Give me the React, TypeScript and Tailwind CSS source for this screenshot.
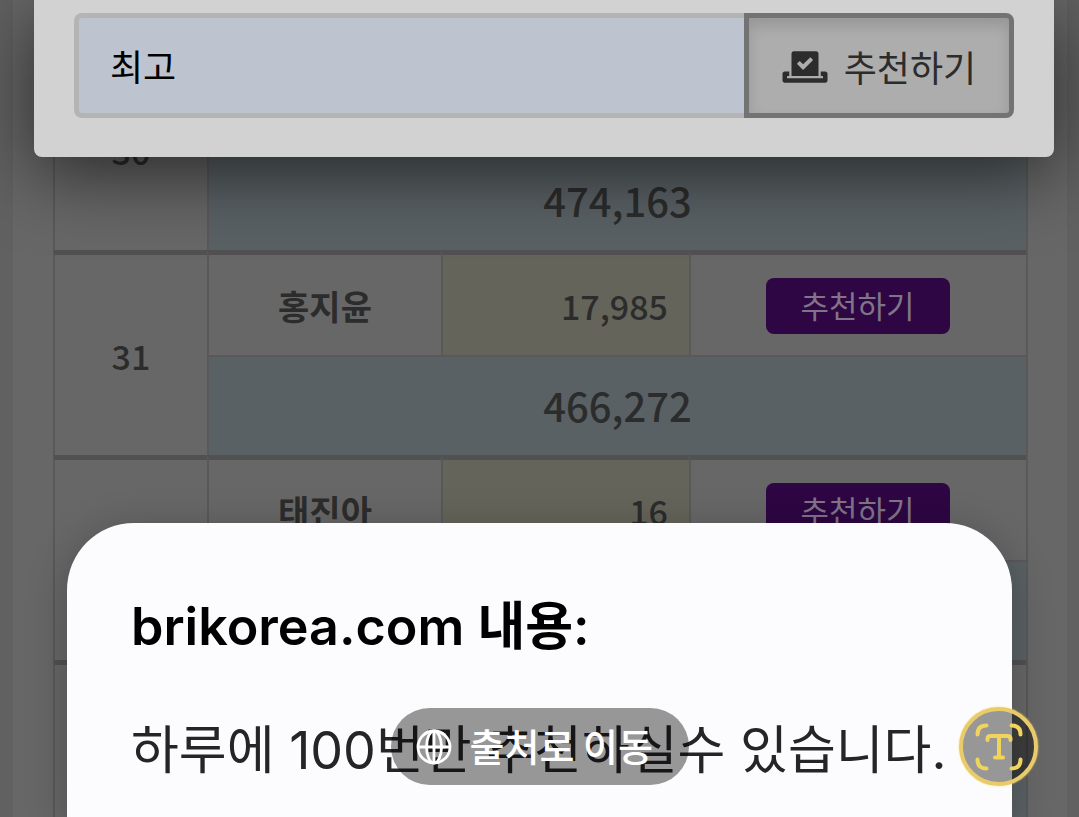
import { FaVoteYea } from "react-icons/fa";

type Entry = {
  rank: string;
  name: string;
  votes: string;
  total: string;
};

const entries: Entry[] = [
  { rank: "30", name: "", votes: "", total: "474,163" },
  { rank: "31", name: "홍지윤", votes: "17,985", total: "466,272" },
  { rank: "32", name: "태진아", votes: "16", total: "" },
  { rank: "", name: "", votes: "", total: "" },
];

const cellStyle = "border-l-2 border-l-[#595959]";
const topCellStyle = "border-t-[5px] border-t-[#515151] pt-0.5";

function EntryRows({ entry }: { entry: Entry }) {
  return (
    <tbody>
      <tr className="h-[105px]">
        <td rowSpan={2} className={`${cellStyle} ${topCellStyle} text-center`}>
          {entry.rank}
        </td>
        <th
          scope="row"
          className={`${cellStyle} ${topCellStyle} text-center font-bold`}
        >
          {entry.name}
        </th>
        <td
          className={`${cellStyle} ${topCellStyle} bg-[#65645a] pr-[21px] text-right`}
        >
          {entry.votes}
        </td>
        <td className={`${cellStyle} ${topCellStyle} pr-0.5 text-center`}>
          {entry.name && (
            <button className="mx-auto block h-14 w-[184px] rounded-lg bg-[#2d0643] pb-1 text-[31px] leading-none font-normal text-[#807488]">
              추천하기
            </button>
          )}
        </td>
      </tr>
      <tr className="h-[100px]">
        <td
          colSpan={3}
          className={`${cellStyle} border-t-2 border-t-[#595959] bg-[#5a6165] pb-0.5 text-center text-[40px] font-medium`}
        >
          {entry.total}
        </td>
      </tr>
    </tbody>
  );
}

function RankingTable() {
  return (
    <table className="w-full table-fixed border-separate border-spacing-0 border-r-2 border-[#595959] text-[34px] leading-none font-medium text-[#2c2c2c]">
      <colgroup>
        <col className="w-[154px]" />
        <col className="w-[234px]" />
        <col className="w-[248px]" />
        <col />
      </colgroup>
      {entries.map((entry, i) => (
        <EntryRows key={i} entry={entry} />
      ))}
    </table>
  );
}

function VoteModal() {
  return (
    <div className="absolute top-0 right-[25px] left-[34px] rounded-b-lg bg-[#d2d2d2] px-10 pt-[13px] pb-[39px] shadow-[0_16px_72px_rgba(0,0,0,0.6)]">
      <form className="flex h-[105px]" onSubmit={(e) => e.preventDefault()}>
        <input
          type="text"
          aria-label="댓글"
          defaultValue="최고"
          className="min-w-0 flex-1 rounded-l-lg border-[5px] border-r-0 border-[#b4b4b4] bg-[#bdc4cf] px-[31px] pb-0.5 text-[36px] text-black outline-none"
        />
        <button className="flex w-[270px] items-center justify-center gap-4 rounded-r-lg border-[5px] border-[#737373] bg-[#adadad] pt-0.5 text-[36px] leading-none text-[#2c2c2c] shadow-[inset_0_8px_14px_rgba(0,0,0,0.13)]">
          <FaVoteYea className="h-9 w-[46px]" />
          <span className="pb-0.5">추천하기</span>
        </button>
      </form>
    </div>
  );
}

function AlertDialog() {
  return (
    <div
      role="alertdialog"
      aria-labelledby="alert-title"
      className="absolute right-[67px] bottom-0 left-[67px] h-[294px] rounded-t-[67px] bg-[#fcfcfe] px-16 pt-[72px] font-['Inter','Noto_Sans_CJK_KR',sans-serif] shadow-[0_8px_40px_rgba(0,0,0,0.25)]"
    >
      <h1 id="alert-title" className="text-[52px] leading-[64px] font-semibold text-black">
        brikorea.com 내용:
      </h1>
      <p className="mt-[56px] text-[52px] leading-[72px] whitespace-nowrap text-[#252528]">
        하루에 100번만 추천하실수 있습니다.
      </p>
    </div>
  );
}

function SourceButton() {
  return (
    <button className="absolute bottom-8 left-1/2 flex h-[77px] w-[298px] -translate-x-1/2 items-center gap-[18px] rounded-full bg-black/40 pl-[25px] text-[38px] leading-none font-medium whitespace-nowrap text-white">
      <svg
        viewBox="0 0 36 36"
        className="size-9 shrink-0"
        fill="none"
        stroke="currentColor"
        strokeWidth="2.8"
      >
        <circle cx="18" cy="18" r="16" />
        <ellipse cx="18" cy="18" rx="7.5" ry="16" />
        <path d="M2 18h32M18 2v32" />
      </svg>
      <span className="pb-1">출처로 이동</span>
    </button>
  );
}

function TextScanButton() {
  return (
    <button
      aria-label="텍스트 추출"
      className="absolute right-[41px] bottom-[31px] flex size-[79px] items-center justify-center rounded-full border-4 border-[#e9cb6c] bg-black/40 text-[#f0d45c] shadow-[0_0_2px_#ffe14a]"
    >
      <svg
        viewBox="0 0 48 48"
        className="size-12"
        fill="none"
        stroke="currentColor"
        strokeWidth="4"
        strokeLinecap="round"
      >
        <path d="M2.5 11.5c0-6 3-9 9-9M36.5 2.5c6 0 9 3 9 9M45.5 36.5c0 6-3 9-9 9M11.5 45.5c-6 0-9-3-9-9" />
        <path d="M12.5 17v-1q0-3 3-3h17q3 0 3 3v1M24 13v21.500M20 34.500h8" />
      </svg>
    </button>
  );
}

export default function App() {
  return (
    <main className="relative h-screen overflow-hidden bg-[#616161] pr-3 pl-[13px] font-['Noto_Sans_CJK_KR',sans-serif]">
      <div className="bg-[#676767] pt-[45px] pr-[39px] pl-10">
        <RankingTable />
      </div>
      <VoteModal />
      <AlertDialog />
      <SourceButton />
      <TextScanButton />
    </main>
  );
}
